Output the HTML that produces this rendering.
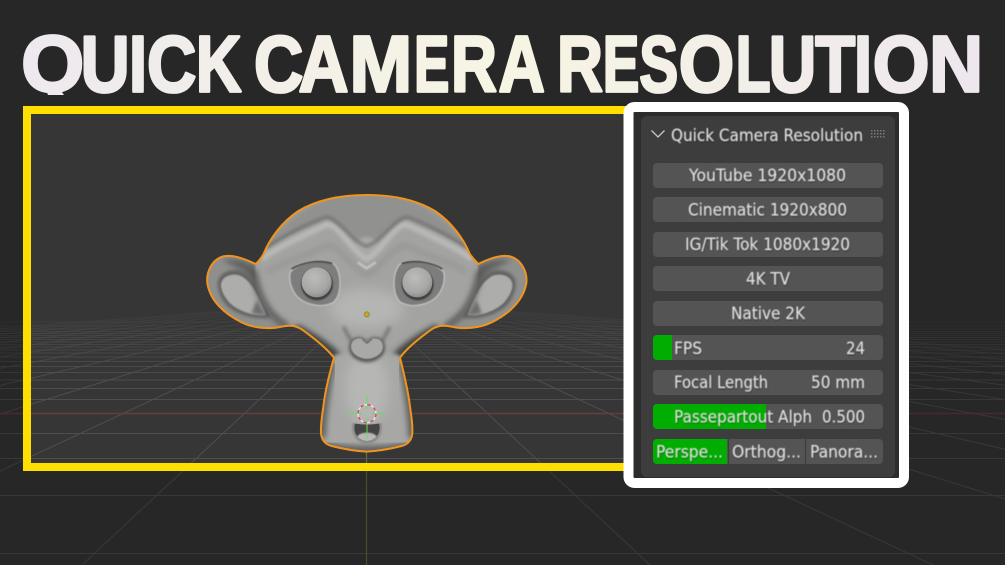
<!DOCTYPE html>
<html lang="en">
<head>
<meta charset="utf-8">
<title>Quick Camera Resolution</title>
<style>
html,body{margin:0;padding:0;background:#272727;width:1005px;height:565px;overflow:hidden}
svg{display:block}
.ui{font-family:"DejaVu Sans","Liberation Sans",sans-serif;font-size:17.3px;fill:#e0e0e0;filter:url(#ts)}
.ttl{font-family:"Liberation Sans",sans-serif;font-weight:700;font-size:80px;fill:url(#tg);stroke:url(#tg);stroke-width:2.8px;stroke-linejoin:round}
.b{fill:#545454}
</style>
</head>
<body>
<svg width="1005" height="565" viewBox="0 0 1005 565" xmlns="http://www.w3.org/2000/svg">
<defs>
<linearGradient id="tg" gradientUnits="userSpaceOnUse" x1="23" y1="0" x2="978" y2="0">
<stop offset="0" stop-color="#eee9ee"/><stop offset=".5" stop-color="#f7f5e3"/><stop offset="1" stop-color="#eee8ee"/>
</linearGradient>
<linearGradient id="gl" gradientUnits="userSpaceOnUse" x1="0" y1="295" x2="0" y2="385">
<stop offset="0" stop-color="#4e4e4e" stop-opacity="0"/><stop offset=".4" stop-color="#4e4e4e" stop-opacity=".45"/><stop offset="1" stop-color="#4e4e4e"/>
</linearGradient>
<filter id="ts" x="-5%" y="-30%" width="110%" height="170%"><feGaussianBlur in="SourceAlpha" stdDeviation=".8" result="b"/><feOffset in="b" dx="0.5" dy="1" result="o"/><feFlood flood-color="#000" flood-opacity=".6"/><feComposite in2="o" operator="in" result="s"/><feGaussianBlur in="SourceGraphic" stdDeviation=".4" result="t"/><feMerge><feMergeNode in="s"/><feMergeNode in="t"/></feMerge></filter>
<filter id="b1" x="-30%" y="-30%" width="160%" height="160%"><feGaussianBlur stdDeviation="1.200"/></filter>
<filter id="b2" x="-30%" y="-30%" width="160%" height="160%"><feGaussianBlur stdDeviation="2.200"/></filter>
<filter id="b4" x="-30%" y="-30%" width="160%" height="160%"><feGaussianBlur stdDeviation="4.500"/></filter>
<filter id="b9" x="-30%" y="-30%" width="160%" height="160%"><feGaussianBlur stdDeviation="9"/></filter>
<filter id="b18" x="-40%" y="-40%" width="180%" height="180%"><feGaussianBlur stdDeviation="18"/></filter>
<radialGradient id="eye" cx=".42" cy=".35" r=".75"><stop offset="0" stop-color="#bcbdba"/><stop offset=".65" stop-color="#a6a7a4"/><stop offset="1" stop-color="#7f807e"/></radialGradient>
<clipPath id="mk"><path d="M515 30C590 30 660 42 720 78C770 112 805 160 825 208C835 222 843 230 850 237C880 222 915 208 945 214C980 224 998 262 994 295C985 345 945 385 890 412C850 432 800 432 770 425C745 420 725 420 700 440C670 462 635 490 615 518C628 570 640 620 645 665C650 700 653 720 652 745C650 765 640 778 620 783C585 792 550 798 515 800C480 798 445 792 410 783C390 778 380 765 378 745C377 720 380 700 385 665C390 620 402 570 417 518C395 490 360 462 330 440C305 420 285 420 260 425C230 432 180 432 140 412C85 385 45 345 37 295C33 262 50 224 85 214C115 208 150 222 182 237C190 230 197 222 205 208C225 160 260 112 310 78C370 42 440 30 515 30Z"/></clipPath>
<clipPath id="tc"><rect x="0" y="28" width="1005" height="67"/></clipPath>
<clipPath id="mc"><path d="M480 716Q516 722 552 716C560 745 540 768 516 768C492 768 472 745 480 716Z"/></clipPath>
</defs>

<!-- viewport -->
<rect width="1005" height="565" fill="#363636"/>
<g fill="none" stroke="url(#gl)" stroke-width="1">
<path d="M0 553.5H1005M0 495.5H1005M0 458.5H1005M0 433.5H1005M0 399.5H1005M0 388.5H1005M0 380H1005M0 372.5H1005M0 366.5H1005M0 361.5H1005M0 357H1005M0 353H1005M0 350H1005M0 347H1005M0 344.5H1005M0 342H1005M0 339.5H1005M0 337.5H1005M0 335.5H1005M0 333.5H1005M0 331.5H1005M0 329H1005M0 326H1005M0 322H1005"/>
<path d="M366 300L650 565M366 300L933 565M366 300L1217 565M366 300L1500 565M366 300L1784 565M366 300L2068 565M366 300L2351 565M366 300L2635 565M366 300L2918 565M366 300L3202 565M366 300L3486 565M366 300L3769 565M366 300L82 565M366 300L-201 565M366 300L-485 565M366 300L-768 565M366 300L-1052 565M366 300L-1336 565M366 300L-1619 565M366 300L-1903 565M366 300L-2186 565M366 300L-2470 565M366 300L-2754 565M366 300L-3037 565"/>
</g>
<path d="M0 413.5H1005" stroke="#6a3a40" stroke-width="1.600"/>
<path d="M366.500 414V565" stroke="#5f7035" stroke-width="1.200"/>
<!-- passepartout -->
<path d="M0 0H1005V565H0ZM27 110V467H660V110Z" fill-rule="evenodd" fill="#000" fill-opacity=".28"/>

<!-- frame -->
<rect x="27" y="110" width="640" height="357" fill="none" stroke="#ffdf00" stroke-width="8"/>

<!-- title -->
<g clip-path="url(#tc)">
<text class="ttl" y="91.500"><tspan x="21.300" textLength="63" lengthAdjust="spacingAndGlyphs">Q</tspan><tspan x="80.600" textLength="49" lengthAdjust="spacingAndGlyphs">U</tspan><tspan x="129" textLength="18" lengthAdjust="spacingAndGlyphs">I</tspan><tspan x="147" textLength="49.400" lengthAdjust="spacingAndGlyphs">C</tspan><tspan x="195.900" textLength="45.600" lengthAdjust="spacingAndGlyphs">K</tspan> <tspan x="254" textLength="49.400" lengthAdjust="spacingAndGlyphs">C</tspan><tspan x="298.500" textLength="50" lengthAdjust="spacingAndGlyphs">A</tspan><tspan x="349.500" textLength="62.700" lengthAdjust="spacingAndGlyphs">M</tspan><tspan x="414" textLength="35.400" lengthAdjust="spacingAndGlyphs">E</tspan><tspan x="451" textLength="46" lengthAdjust="spacingAndGlyphs">R</tspan><tspan x="498.500" textLength="44" lengthAdjust="spacingAndGlyphs">A</tspan> <tspan x="557" textLength="46" lengthAdjust="spacingAndGlyphs">R</tspan><tspan x="602.800" textLength="36.600" lengthAdjust="spacingAndGlyphs">E</tspan><tspan x="639.200" textLength="39" lengthAdjust="spacingAndGlyphs">S</tspan><tspan x="678.700" textLength="55.500" lengthAdjust="spacingAndGlyphs">O</tspan><tspan x="735.600" textLength="35" lengthAdjust="spacingAndGlyphs">L</tspan><tspan x="768.700" textLength="47.500" lengthAdjust="spacingAndGlyphs">U</tspan><tspan x="815.300" textLength="40" lengthAdjust="spacingAndGlyphs">T</tspan><tspan x="854" textLength="18" lengthAdjust="spacingAndGlyphs">I</tspan><tspan x="872.700" textLength="56.700" lengthAdjust="spacingAndGlyphs">O</tspan><tspan x="929.100" textLength="54" lengthAdjust="spacingAndGlyphs">N</tspan></text>
</g>

<!-- monkey -->
<g transform="translate(195 185) scale(.33333)">
<g clip-path="url(#mk)">
<rect x="0" y="0" width="1035" height="825" fill="#a3a4a2"/>
<!-- dome -->
<path d="M190 210C250 100 400 10 515 10C630 10 780 100 840 210L780 175L635 100L515 185L395 100L250 175Z" fill="#91928f" filter="url(#b9)"/>
<ellipse cx="515" cy="180" rx="30" ry="24" fill="#a9aaa8" filter="url(#b4)"/>
<!-- ears -->
<path d="M20 190H190L290 450H20Z" fill="#8f908e"/>
<path d="M1015 190H840L740 450H1015Z" fill="#8f908e"/>
<path d="M80 225C120 218 160 228 185 245L190 300L140 255Z" fill="#5f605f" filter="url(#b9)"/>
<path d="M950 225C910 218 870 228 845 245L840 300L890 255Z" fill="#5f605f" filter="url(#b9)"/>
<path d="M68 300C66 268 100 250 135 256C172 266 200 325 228 398C185 405 125 392 92 358C78 340 70 320 68 300Z" fill="#626362" filter="url(#b4)"/>
<path d="M962 300C964 268 930 250 895 256C858 266 830 325 802 398C845 405 905 392 938 358C952 340 960 320 962 300Z" fill="#626362" filter="url(#b4)"/>
<path d="M78 305C75 280 100 264 130 270C165 280 195 335 212 390C178 394 130 380 102 352C88 335 80 320 78 305Z" fill="#adaeac" filter="url(#b2)"/>
<path d="M952 305C955 280 930 264 900 270C865 280 835 335 818 390C852 394 900 380 928 352C942 335 950 320 952 305Z" fill="#adaeac" filter="url(#b2)"/>
<path d="M185 345L212 392L170 385Z" fill="#6d6e6d" filter="url(#b4)"/>
<path d="M845 345L818 392L860 385Z" fill="#6d6e6d" filter="url(#b4)"/>
<!-- head -->
<path d="M182 240C200 170 350 120 400 120C440 130 480 200 515 210C550 200 590 130 630 120C680 120 830 170 848 240C860 320 810 400 760 425C700 455 640 480 600 510H430C390 480 330 455 270 425C220 400 170 320 182 240Z" fill="#a3a4a2" filter="url(#b2)"/>
<!-- head sides / cheeks -->
<path d="M176 255C190 345 225 395 280 425" fill="none" stroke="#565756" stroke-width="18" filter="url(#b9)"/>
<path d="M854 255C840 345 805 395 750 425" fill="none" stroke="#565756" stroke-width="18" filter="url(#b9)"/>
<path d="M300 430C350 455 390 480 425 515" fill="none" stroke="#3e3f3e" stroke-width="28" filter="url(#b9)"/>
<path d="M730 430C680 455 640 480 605 515" fill="none" stroke="#3e3f3e" stroke-width="28" filter="url(#b9)"/>
<!-- brow -->
<path d="M200 222C240 190 320 155 395 118C435 118 470 200 515 222C560 200 595 118 635 118C710 155 790 190 830 222" fill="none" stroke="#b8b9b6" stroke-width="18" filter="url(#b4)"/>
<path d="M215 262C270 225 340 215 395 180C440 185 470 250 515 270C560 250 590 185 635 180C690 215 760 225 815 262" fill="none" stroke="#959694" stroke-width="14" filter="url(#b9)"/>
<path d="M215 186C265 156 330 116 395 96C430 100 470 168 515 184C560 168 600 100 635 96C700 116 765 156 815 186" fill="none" stroke="#6f706e" stroke-width="8" filter="url(#b4)"/>
<path d="M488 232L515 250L542 232" fill="none" stroke="#c6c7c4" stroke-width="7" filter="url(#b2)"/>
<!-- lower face light -->
<ellipse cx="515" cy="370" rx="110" ry="60" fill="#b5b6b3" filter="url(#b18)"/>
<!-- muzzle folds -->
<path d="M445 425C455 445 462 455 470 470M585 425C575 445 568 455 560 470" fill="none" stroke="#777876" stroke-width="10" filter="url(#b4)"/>
<!-- neck -->
<path d="M420 510H612C638 585 652 680 652 750C650 775 620 790 515 803C410 790 380 775 378 750C378 680 394 585 420 510Z" fill="#a7a8a6" filter="url(#b4)"/>
<ellipse cx="515" cy="610" rx="65" ry="110" fill="#b6b7b5" filter="url(#b18)"/>
<path d="M410 530C396 600 383 680 380 760" fill="none" stroke="#5d5e5d" stroke-width="24" filter="url(#b9)"/>
<path d="M622 530C636 600 649 680 652 760" fill="none" stroke="#5d5e5d" stroke-width="24" filter="url(#b9)"/>
<path d="M380 778C430 800 600 800 650 778" fill="none" stroke="#5d5e5d" stroke-width="24" filter="url(#b9)"/>
</g>
<!-- eye sockets -->
<path d="M285 262C312 232 380 218 418 238C442 268 440 330 415 352C380 372 320 360 297 322C286 302 282 285 285 262Z" fill="#7c7d7b" stroke="#c0c1be" stroke-width="4" filter="url(#b1)"/>
<path d="M747 262C720 232 652 218 614 238C590 268 592 330 617 352C652 372 712 360 735 322C746 302 750 285 747 262Z" fill="#7c7d7b" stroke="#c0c1be" stroke-width="4" filter="url(#b1)"/>
<path d="M290 252C320 234 370 222 412 236" fill="none" stroke="#454645" stroke-width="5" filter="url(#b1)"/>
<path d="M742 252C712 234 662 222 620 236" fill="none" stroke="#454645" stroke-width="5" filter="url(#b1)"/>
<circle cx="366" cy="298" r="48" fill="#3f403f" filter="url(#b2)"/>
<circle cx="668" cy="298" r="48" fill="#3f403f" filter="url(#b2)"/>
<circle cx="365" cy="292" r="45" fill="url(#eye)"/>
<circle cx="667" cy="292" r="45" fill="url(#eye)"/>
<!-- nose -->
<path d="M516 470C530 448 572 452 570 492C566 520 535 532 516 532C497 532 466 520 462 492C460 452 502 448 516 470Z" fill="#585958" filter="url(#b4)"/>
<path d="M516 470C530 454 566 456 564 488C561 510 535 522 516 522C497 522 471 510 468 488C466 456 502 454 516 470Z" fill="#a9aaa8" filter="url(#b1)"/>
<path d="M502 462L516 474L530 462" fill="none" stroke="#5f605f" stroke-width="4" filter="url(#b1)"/>
<!-- mouth -->
<path d="M472 714Q516 722 560 714C566 750 545 776 516 776C487 776 466 750 472 714Z" fill="#8b8c8a" filter="url(#b2)"/>
<path d="M480 716Q516 722 552 716C560 745 540 768 516 768C492 768 472 745 480 716Z" fill="#434443"/>
<g clip-path="url(#mc)"><ellipse cx="516" cy="758" rx="30" ry="15" fill="#b8b9b7" filter="url(#b2)"/></g>
<!-- outline -->
<path d="M515 30C590 30 660 42 720 78C770 112 805 160 825 208C835 222 843 230 850 237C880 222 915 208 945 214C980 224 998 262 994 295C985 345 945 385 890 412C850 432 800 432 770 425C745 420 725 420 700 440C670 462 635 490 615 518C628 570 640 620 645 665C650 700 653 720 652 745C650 765 640 778 620 783C585 792 550 798 515 800C480 798 445 792 410 783C390 778 380 765 378 745C377 720 380 700 385 665C390 620 402 570 417 518C395 490 360 462 330 440C305 420 285 420 260 425C230 432 180 432 140 412C85 385 45 345 37 295C33 262 50 224 85 214C115 208 150 222 182 237C190 230 197 222 205 208C225 160 260 112 310 78C370 42 440 30 515 30Z" fill="none" stroke="#f0941f" stroke-width="6" stroke-linejoin="round"/>
<!-- origin -->
<circle cx="515.500" cy="388" r="7.500" fill="#e8981f" stroke="#6f9c3c" stroke-width="3"/>
<!-- cursor -->
<path d="M516 632V672M516 700V760M462 686H502M530 686H570" stroke="#5fe05f" stroke-width="3"/>
<circle cx="516" cy="686" r="27" fill="none" stroke="#e8e8e8" stroke-width="4"/>
<circle cx="516" cy="686" r="27" fill="none" stroke="#d8404a" stroke-width="4" stroke-dasharray="10.600 10.600"/>
</g>

<!-- panel -->
<rect x="628.500" y="107" width="275.500" height="376" rx="6" fill="#2c2c2c" stroke="#fff" stroke-width="10"/>
<rect x="641" y="116" width="254" height="361" rx="6" fill="#3d3d3d"/>
<path d="M651.500 130.500L658 137L664.500 130.500" fill="none" stroke="#c8c8c8" stroke-width="1.300"/>
<text class="ui" x="671" y="141" textLength="192" lengthAdjust="spacingAndGlyphs">Quick Camera Resolution</text>
<g fill="#7c7c7c"><path d="M871 130h1.500v1.500h-1.500zM874 130h1.500v1.500h-1.500zM877 130h1.500v1.500h-1.500zM880 130h1.500v1.500h-1.500zM883 130h1.500v1.500h-1.500zM871 133h1.500v1.500h-1.500zM874 133h1.500v1.500h-1.500zM877 133h1.500v1.500h-1.500zM880 133h1.500v1.500h-1.500zM883 133h1.500v1.500h-1.500zM871 136h1.500v1.500h-1.500zM874 136h1.500v1.500h-1.500zM877 136h1.500v1.500h-1.500zM880 136h1.500v1.500h-1.500zM883 136h1.500v1.500h-1.500z"/></g>

<rect class="b" x="653" y="163" width="230" height="25" rx="4"/>
<rect class="b" x="653" y="197" width="230" height="25" rx="4"/>
<rect class="b" x="653" y="232" width="230" height="25" rx="4"/>
<rect class="b" x="653" y="266" width="230" height="25" rx="4"/>
<rect class="b" x="653" y="301" width="230" height="25" rx="4"/>
<rect class="b" x="653" y="335" width="230" height="25" rx="4"/>
<rect class="b" x="653" y="370" width="230" height="25" rx="4"/>
<rect class="b" x="653" y="404" width="230" height="25" rx="4"/>
<rect class="b" x="653" y="439" width="230" height="25" rx="4"/>

<path d="M657 335H672V360H657A4 4 0 0 1 653 356V339A4 4 0 0 1 657 335Z" fill="#02ad02"/>
<path d="M657 404H766V429H657A4 4 0 0 1 653 425V408A4 4 0 0 1 657 404Z" fill="#02ad02"/>
<path d="M657 439H727V464H657A4 4 0 0 1 653 460V443A4 4 0 0 1 657 439Z" fill="#02ad02"/>
<path d="M728.500 439V464M805.500 439V464" stroke="#3d3d3d" stroke-width="1.200"/>

<text class="ui" x="689" y="181" textLength="157" lengthAdjust="spacingAndGlyphs">YouTube 1920x1080</text>
<text class="ui" x="688" y="215.500" textLength="159" lengthAdjust="spacingAndGlyphs">Cinematic 1920x800</text>
<text class="ui" x="685" y="250" textLength="165" lengthAdjust="spacingAndGlyphs">IG/Tik Tok 1080x1920</text>
<text class="ui" x="746" y="284.500" textLength="44" lengthAdjust="spacingAndGlyphs">4K TV</text>
<text class="ui" x="731" y="319" textLength="74" lengthAdjust="spacingAndGlyphs">Native 2K</text>
<text class="ui" x="674" y="354" textLength="28" lengthAdjust="spacingAndGlyphs">FPS</text>
<text class="ui" x="846" y="354" textLength="19" lengthAdjust="spacingAndGlyphs">24</text>
<text class="ui" x="674" y="388" textLength="94" lengthAdjust="spacingAndGlyphs">Focal Length</text>
<text class="ui" x="811" y="388" textLength="54" lengthAdjust="spacingAndGlyphs">50 mm</text>
<text class="ui" x="674" y="422.500" textLength="138" lengthAdjust="spacingAndGlyphs">Passepartout Alph</text>
<text class="ui" x="822" y="422.500" textLength="43" lengthAdjust="spacingAndGlyphs">0.500</text>
<text class="ui" x="656" y="457.500" textLength="67" lengthAdjust="spacingAndGlyphs">Perspe...</text>
<text class="ui" x="732" y="457.500" textLength="69" lengthAdjust="spacingAndGlyphs">Orthog...</text>
<text class="ui" x="810" y="457.500" textLength="68" lengthAdjust="spacingAndGlyphs">Panora...</text>
</svg>
</body>
</html>
